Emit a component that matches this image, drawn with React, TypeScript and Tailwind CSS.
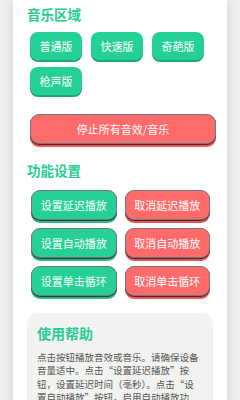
import React from "react";

const musicButtons = ["普通版", "快速版", "奇葩版", "枪声版"];

const settings = [
  { set: "设置延迟播放", cancel: "取消延迟播放" },
  { set: "设置自动播放", cancel: "取消自动播放" },
  { set: "设置单击循环", cancel: "取消单击循环" },
];

export default function App() {
  return (
    <div
      className="min-h-[400px] bg-[#efefed] px-[13px]"
      style={{ fontFamily: '"Noto Sans CJK SC", "Noto Sans", sans-serif' }}
    >
      <div className="bg-white px-[14px] pt-[4px] pb-6 shadow-[0_0_10px_rgba(0,0,0,0.13)]">
        {/* 音乐区域 */}
        <h2 className="text-[13.5px] leading-[20px] font-bold text-[#26cc93]">音乐区域</h2>
        <div className="mt-[8px] flex flex-wrap gap-x-[9px] gap-y-[7px] pl-[3px]">
          {musicButtons.map((label) => (
            <button
              key={label}
              className="h-[28px] w-[52px] rounded-[8px] bg-[#24d096] text-[11px] text-white shadow-[0_2px_0_#1ba778]"
            >
              {label}
            </button>
          ))}
        </div>

        <button className="mt-[19px] ml-[3px] h-[30px] w-[186px] rounded-[9px] border border-[#777] bg-[#ff6b6b] text-[11px] text-white shadow-[0_1px_0_#333,0_3px_0_#ff4f55]">
          停止所有音效/音乐
        </button>

        {/* 功能设置 */}
        <h2 className="mt-[16px] text-[13.5px] leading-[20px] font-bold text-[#26cc93]">功能设置</h2>
        <div className="mt-[10px] grid grid-cols-2 gap-x-[8px] gap-y-[8px] pl-[4px] pr-[3px]">
          {settings.map((row) => (
            <React.Fragment key={row.set}>
              <button className="h-[30px] rounded-[9px] border border-[#777] bg-[#24d096] text-[11px] text-white shadow-[0_1px_0_#333,0_3px_0_#1ec28b]">
                {row.set}
              </button>
              <button className="h-[30px] rounded-[9px] border border-[#777] bg-[#ff6b6b] text-[11px] text-white shadow-[0_1px_0_#333,0_3px_0_#ff4f55]">
                {row.cancel}
              </button>
            </React.Fragment>
          ))}
        </div>

        {/* 使用帮助 */}
        <div className="mt-[17px] rounded-[10px] bg-[#f2f3f1] px-[10px] pt-[10px] pb-3">
          <h3 className="text-[14px] leading-[20px] font-bold text-[#26cc93]">使用帮助</h3>
          <p className="mt-[8px] text-[9.5px] leading-[13.3px] text-[#555]">
            点击按钮播放音效或音乐。请确保设备音量适中。点击“设置延迟播放”按钮，设置延迟时间（毫秒）。点击“设置自动播放”按钮，启用自动播放功能。点击“设置单击循环”按钮，单击按钮后循环播放。点击“停止所有音效/音乐”按钮可停止播放。
          </p>
        </div>
      </div>
    </div>
  );
}
